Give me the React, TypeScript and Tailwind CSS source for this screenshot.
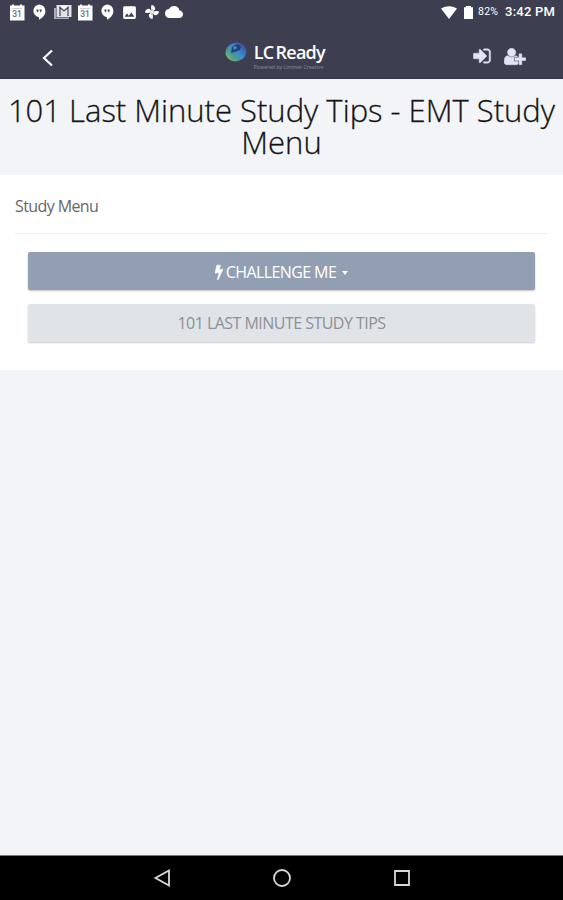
import React from 'react';
import { MdCloud, MdImage } from 'react-icons/md';

function CalendarIcon() {
  return (
    <svg viewBox="0 0 16 17" className="w-4 h-[17px]">
      <path fill="#fff" d="M1 1.500h2V.5h2v1h6v-1h2v1h2.500V16.500H1z" />
      <path fill="#b9bac6" d="M3 4h10v.7H3z" />
      <text x="8" y="12.500" textAnchor="middle" fontSize="8.500" fontWeight="500" fill="#6c6d78" fontFamily="Roboto, sans-serif">31</text>
    </svg>
  );
}

function HangoutsIcon() {
  return (
    <svg viewBox="0 0 14 16" className="w-[14px] h-4">
      <path fill="#fff" d="M7 .5a6.400 6.400 0 0 1 6.400 6.400c0 4-3 7-6.400 8.800V13.200A6.400 6.400 0 0 1 7 .5z" />
      <path fill="#3d3f50" d="M4.500 5.600h1.900v1.600L5.600 8.200H5l.3-1h-.8zM7.700 5.600h1.900v1.600l-.8 1h-.6l.3-1h-.8z" />
    </svg>
  );
}

function MailIcon() {
  return (
    <svg viewBox="0 0 18 16" className="w-[18px] h-4">
      <path fill="#a9aab4" d="M0 4h2v9.500h13V15H0z" />
      <path fill="#e2e3e8" d="M2.500 1H17.500v12H2.500z" />
      <path fill="none" stroke="#4b4d5c" strokeWidth="1.300" d="M6 12V3.500l4 3.500 4-3.500V12" />
      <path fill="#fff" d="M6.500 2h7L10 5z" />
    </svg>
  );
}

function PinwheelIcon() {
  return (
    <svg viewBox="0 0 16 16" className="w-4 h-4" fill="#fff">
      <path d="M7.300 1c2.500 0 3.900 1.800 3.900 4.300L8.800 7.600V5.300L7.300 4.500z" />
      <path d="M7.300 1c2.500 0 3.900 1.800 3.900 4.300L8.800 7.600V5.300L7.300 4.500z" transform="rotate(90 8 8)" />
      <path d="M7.300 1c2.500 0 3.900 1.800 3.900 4.300L8.800 7.600V5.300L7.300 4.500z" transform="rotate(180 8 8)" />
      <path d="M7.300 1c2.500 0 3.900 1.800 3.900 4.300L8.800 7.600V5.300L7.300 4.500z" transform="rotate(270 8 8)" />
      <path fill="none" stroke="#fff" strokeWidth="1.300" d="M8 3v10M3 8h10" />
    </svg>
  );
}

function StatusBar() {
  return (
    <div className="h-6 flex items-center justify-between pl-[9px] pr-2 text-white">
      <div className="flex items-center h-full">
        <CalendarIcon />
        <span className="ml-[7px]"><HangoutsIcon /></span>
        <span className="ml-[8px]"><MailIcon /></span>
        <span className="ml-[5px]"><CalendarIcon /></span>
        <span className="ml-[7px]"><HangoutsIcon /></span>
        <MdImage className="ml-[7px] w-[17px] h-[17px]" />
        <span className="ml-[6px]"><PinwheelIcon /></span>
        <MdCloud className="ml-[5px] w-[18px] h-[18px]" />
      </div>
      <div className="flex items-center h-full font-['Roboto',sans-serif]">
        <svg viewBox="0 0 16 13" className="w-4 h-[13px]">
          <path fill="#fff" d="M0 2.500Q8-2 16 2.500L8 13z" />
        </svg>
        <svg viewBox="0 0 9 13" className="ml-[7px] w-[9px] h-[13px]">
          <path fill="#fff" d="M0 1.200h2V0h5v1.200h2V13H0z" />
        </svg>
        <span className="ml-[5px] w-[21px] text-[10.500px] tracking-[0.200px] whitespace-nowrap">82%</span>
        <span className="ml-[6px] text-[13px] tracking-[0.200px] font-medium whitespace-nowrap">3:42 PM</span>
      </div>
    </div>
  );
}

function Logo() {
  return (
    <div className="flex items-start">
      <svg viewBox="0 0 22 20" className="w-[22px] h-5 mt-[1px]">
        <defs>
          <linearGradient id="globe" x1="0" y1="0.800" x2="1" y2="0.300">
            <stop offset="0" stopColor="#8fc05a" />
            <stop offset="0.300" stopColor="#4b9b90" />
            <stop offset="0.600" stopColor="#3b85d0" />
            <stop offset="1" stopColor="#3b4f9b" />
          </linearGradient>
        </defs>
        <ellipse cx="11" cy="10" rx="10.500" ry="9.300" fill="url(#globe)" transform="rotate(-15 11 10)" />
        <path fill="#253d7c" d="M7 5l5-3 4 2-1 4-5 2-4 1z" />
        <path fill="#3d9aa0" d="M8 5l3-1 1 2-3 2z" />
      </svg>
      <div className="ml-[7px]">
        <div className="text-[18px] leading-[20px] pt-px font-semibold tracking-[-0.800px] [word-spacing:-1.500px] text-white whitespace-nowrap">LC Ready</div>
        <div className="mt-[2px] text-[5.200px] leading-[6px] text-[#8b8d9b] whitespace-nowrap">Powered by Limmer Creative</div>
      </div>
    </div>
  );
}

function SignInIcon() {
  return (
    <svg viewBox="0 0 1792 1792" className="w-[20px] h-[20px]" fill="currentColor" stroke="currentColor" strokeWidth="40">
      <path d="M1312 896q0 26-19 45l-544 544q-19 19-45 19t-45-19-19-45v-288h-448q-26 0-45-19t-19-45v-384q0-26 19-45t45-19h448v-288q0-26 19-45t45-19 45 19l544 544q19 19 19 45zm352-352v704q0 119-84.500 203.500t-203.500 84.500h-320q-13 0-22.500-9.500t-9.500-22.500q0-4-1-20t-.5-26.500 3-23.500 10-19.500 20.500-6.500h320q66 0 113-47t47-113v-704q0-66-47-113t-113-47h-312l-11.500-1-11.500-3-8-5.500-7-9-2-13.500q0-4-1-20t-.5-26.500 3-23.500 10-19.500 20.500-6.500h320q119 0 203.500 84.500t84.500 203.500z" />
    </svg>
  );
}

function UserPlusIcon() {
  return (
    <svg viewBox="0 0 2048 1792" className="w-[22px] h-[19px]" fill="currentColor" stroke="currentColor" strokeWidth="50">
      <path d="M704 896q-159 0-271.500-112.500t-112.500-271.500 112.500-271.500 271.500-112.500 271.500 112.500 112.500 271.500-112.500 271.500-271.500 112.500zm960 128h352q13 0 22.500 9.500t9.500 22.500v192q0 13-9.500 22.500t-22.500 9.500h-352v352q0 13-9.500 22.500t-22.500 9.500h-192q-13 0-22.500-9.500t-9.500-22.500v-352h-352q-13 0-22.500-9.500t-9.500-22.500v-192q0-13 9.500-22.500t22.500-9.500h352v-352q0-13 9.500-22.500t22.500-9.500h192q13 0 22.500 9.500t9.500 22.500v352zm-736 224q0 52 38 90t90 38h256v238q-68 50-171 50h-874q-121 0-194-69t-73-190q0-53 3.500-103.500t14-109 26.500-108.500 43-97.500 62-81 85.500-53.500 111.500-20q19 0 39 17 79 61 154.500 91.500t164.500 30.500 164.500-30.500 154.500-91.500q20-17 39-17 132 0 217 96h-223q-52 0-90 38t-38 90v192z" />
    </svg>
  );
}

function BoltIcon() {
  return (
    <svg viewBox="448 0 896 1792" className="w-2 h-4" fill="currentColor" stroke="currentColor" strokeWidth="60">
      <path d="M1333 566q18 20 7 44l-540 1157q-13 25-42 25-4 0-14-2-17-5-25.500-19t-4.500-30l197-808-406 101q-4 1-12 1-18 0-31-11-18-15-13-39l201-825q4-14 16-23t28-9h328q19 0 32 12.500t13 29.500q0 8-5 18l-171 463 396-98q8-2 12-2 19 0 34 15z" />
    </svg>
  );
}

function NavBar() {
  return (
    <div className="h-[54px] grid grid-cols-3 items-start">
      <button className="ml-[42px] mt-[25px] w-3">
        <svg viewBox="0 0 12 18" className="w-3 h-[18px]" fill="none" stroke="#fff" strokeWidth="2.200">
          <path d="M10 1.500L2 9l8 7.500" />
        </svg>
      </button>
      <div className="ml-[37px] mt-[17px]">
        <Logo />
      </div>
      <div className="flex items-center justify-end gap-3 mt-[22px] pr-[37px] text-[#e3e5f4]">
        <SignInIcon />
        <UserPlusIcon />
      </div>
    </div>
  );
}

export default function App() {
  return (
    <div className="h-[900px] w-full flex flex-col bg-[#f2f4f8] font-['Open_Sans',sans-serif]">
      <header className="h-[79px] bg-[#3d3f50] border-b border-[#333544]">
        <StatusBar />
        <NavBar />
      </header>

      <h1 className="h-[96px] pt-[15px] text-center text-[31px] leading-[32px] text-[#111] font-light [-webkit-text-stroke:0.300px_#222]">
        101 Last Minute Study Tips - EMT Study Menu
      </h1>

      <section className="h-[195px] bg-white px-[15px]">
        <div className="h-[59px] pt-[20px] border-b border-[#eeeeee] text-[16px] leading-[22px] tracking-[-0.600px] text-[#666]">
          Study Menu
        </div>
        <div className="flex flex-col gap-[14px] px-[13px] pt-[18px]">
          <button className="h-[38px] pt-px flex items-center justify-center rounded-[2px] bg-[#929fb3] text-[16px] tracking-[-0.600px] text-white shadow-[0_1px_2px_rgba(0,0,0,0.25)]">
            <BoltIcon />
            <span className="ml-[3px]">CHALLENGE ME</span>
            <span className="ml-[6px] mt-[2px] border-x-[3.500px] border-x-transparent border-t-[4px] border-t-white" />
          </button>
          <button className="h-[38px] flex items-center justify-center rounded-[2px] bg-[#e0e3e8] text-[16px] tracking-[-0.530px] text-[#8d9096] shadow-[0_1px_2px_rgba(0,0,0,0.2)]">
            101 LAST MINUTE STUDY TIPS
          </button>
        </div>
      </section>

      <div className="flex-1" />

      <nav className="h-[45px] bg-black border-t border-[#777] flex items-center justify-center gap-[102px]">
        <svg viewBox="0 0 18 18" className="w-[18px] h-[18px]" fill="none" stroke="#d8d8d8" strokeWidth="1.800">
          <path d="M16 1.500v15L2.500 9z" />
        </svg>
        <svg viewBox="0 0 18 18" className="w-[18px] h-[18px]" fill="none" stroke="#d8d8d8" strokeWidth="1.800">
          <circle cx="9" cy="9" r="8" />
        </svg>
        <svg viewBox="0 0 18 18" className="w-[18px] h-[18px]" fill="none" stroke="#d8d8d8" strokeWidth="1.800">
          <path d="M2 2h14v14H2z" />
        </svg>
      </nav>
    </div>
  );
}
